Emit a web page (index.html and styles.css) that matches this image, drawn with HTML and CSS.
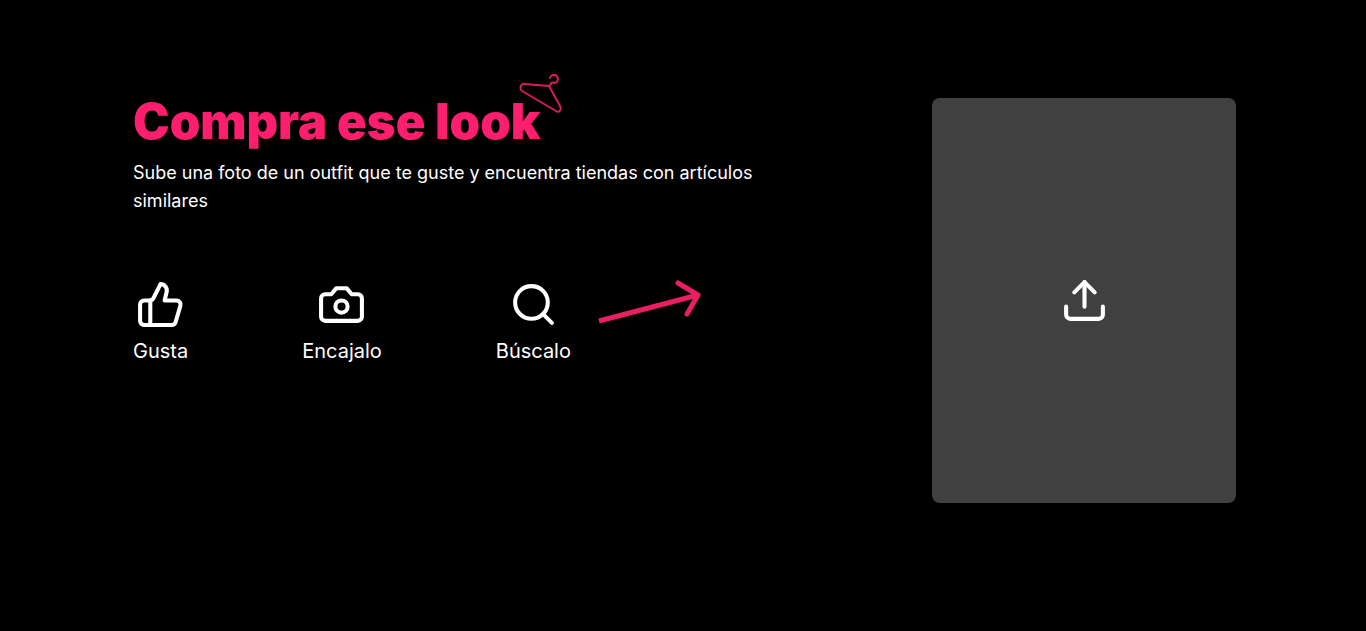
FILE: index.html
```
<!DOCTYPE html>
<html lang="es">
<head>
    <meta charset="UTF-8">
    <meta name="viewport" content="width=device-width, initial-scale=1.0">
    <title>Compra ese look</title>
    <link rel="stylesheet" href="styles.css">
</head>
<body>
    <main class="container">
        <section class="intro">
            <h1>
                Compra ese look
                <svg class="hanger" viewBox="0 0 48 44" aria-hidden="true">
                    <path d="M32 7a4 4 0 1 1 4 5c-2-1-3 0-3 1l-2 2L7 13c-4-1-6 4-3 7l34 20c3 2 6-1 4-5L31 15" />
                </svg>
            </h1>
            <p class="description">Sube una foto de un outfit que te guste y encuentra tiendas con artículos similares</p>
            <div class="steps-row">
                <ul class="steps">
                    <li class="step">
                        <svg class="icon" viewBox="0 0 24 24" aria-hidden="true">
                            <path d="M7 10v12" />
                            <path d="M15 5.88 14 10h5.83a2 2 0 0 1 1.92 2.56l-2.33 8A2 2 0 0 1 17.5 22H4a2 2 0 0 1-2-2v-8a2 2 0 0 1 2-2h2.76a2 2 0 0 0 1.79-1.11L12 2a3.13 3.13 0 0 1 3 3.88Z" />
                        </svg>
                        <span>Gusta</span>
                    </li>
                    <li class="step">
                        <svg class="icon" viewBox="0 0 24 24" aria-hidden="true">
                            <path d="M14.5 4h-5L7 7H4a2 2 0 0 0-2 2v9a2 2 0 0 0 2 2h16a2 2 0 0 0 2-2V9a2 2 0 0 0-2-2h-3l-2.5-3z" />
                            <circle cx="12" cy="13" r="3" />
                        </svg>
                        <span>Encajalo</span>
                    </li>
                    <li class="step">
                        <svg class="icon" viewBox="0 0 24 24" aria-hidden="true">
                            <circle cx="11" cy="11" r="8" />
                            <path d="m21 21-4.3-4.3" />
                        </svg>
                        <span>Búscalo</span>
                    </li>
                </ul>
                <svg class="arrow" viewBox="0 0 104 48" aria-hidden="true">
                    <path class="arrow-shaft" d="M2 41 101 15" />
                    <path class="arrow-head" d="M81 3 101 15 90 34" />
                </svg>
            </div>
        </section>
        <button type="button" class="upload" aria-label="Subir foto">
            <svg class="icon" viewBox="0 0 24 24" aria-hidden="true">
                <path d="M21 15v4a2 2 0 0 1-2 2H5a2 2 0 0 1-2-2v-4" />
                <path d="m17 8-5-5-5 5" />
                <path d="M12 3v12" />
            </svg>
        </button>
    </main>
</body>
</html>
```
FILE: styles.css
```
* {
    box-sizing: border-box;
}

body {
    margin: 0;
    background-color: #000;
    color: #fff;
    font-family: Inter, sans-serif;
}

.container {
    display: grid;
    grid-template-columns: minmax(0, 1fr) 304px;
    gap: 96px;
    align-items: start;
    padding: 98px 130px 32px 133px;
}

h1 {
    position: relative;
    width: fit-content;
    margin: 0 0 13px;
    color: #ff1d6e;
    font-size: 49px;
    font-weight: 900;
    line-height: 48px;
}

/* Hangs from the last letter of the title */
.hanger {
    position: absolute;
    top: -27px;
    right: -25px;
    width: 48px;
    height: 44px;
    fill: none;
    stroke: #d81b60;
    stroke-width: 2;
    stroke-linecap: round;
    stroke-linejoin: round;
}

.description {
    max-width: 660px;
    margin: 0;
    font-size: 18px;
    line-height: 28px;
}

.steps-row {
    display: flex;
    align-items: flex-start;
    gap: 26px;
    margin-top: 65px;
}

.steps {
    display: flex;
    gap: 114px;
    margin: 0;
    padding: 0;
    list-style: none;
}

.step {
    display: flex;
    flex-direction: column;
    align-items: center;
    gap: 8px;
    font-size: 20px;
    line-height: 28px;
}

.icon {
    width: 49px;
    height: 49px;
    fill: none;
    stroke: currentColor;
    stroke-width: 2;
    stroke-linecap: round;
    stroke-linejoin: round;
}

.arrow {
    width: 104px;
    height: 48px;
    fill: none;
    stroke: #e91e63;
    stroke-width: 5;
}

.arrow-head {
    stroke-linecap: round;
    stroke-linejoin: round;
}

.upload {
    display: flex;
    align-items: center;
    justify-content: center;
    width: 100%;
    aspect-ratio: 3 / 4;
    padding: 0;
    border: 0;
    border-radius: 8px;
    background-color: #404040;
    color: #fff;
    cursor: pointer;
}

.upload:hover {
    background-color: #4a4a4a;
}

@media screen and (max-width: 1000px) {
    .container {
        grid-template-columns: minmax(0, 1fr);
        gap: 40px;
        padding: 48px 24px;
    }

    .steps {
        gap: 40px;
    }

    .arrow {
        display: none;
    }

    .upload {
        max-width: 304px;
        margin: 0 auto;
    }
}
```
